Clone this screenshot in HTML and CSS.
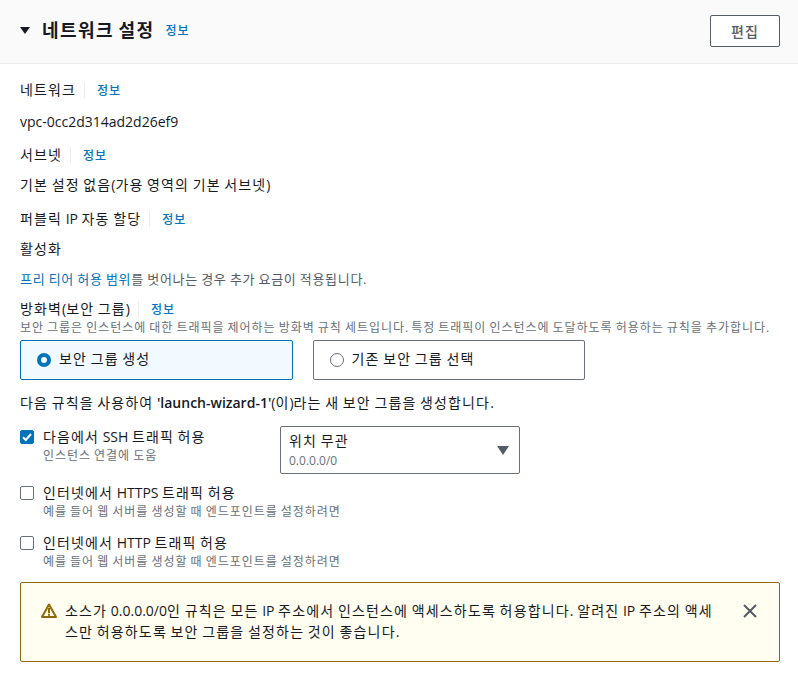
FILE: index.html
```html
<!DOCTYPE html>
<html lang="ko">
<head>
<meta charset="utf-8">
<title>네트워크 설정</title>
<link rel="stylesheet" href="styles.css">
</head>
<body>
<header class="head">
  <div class="head-left">
    <svg class="caret" width="10" height="7" viewBox="0 0 10 7"><path d="M0 0h10L5 7z" fill="#16191f"/></svg>
    <h2 class="title">네트워크 설정</h2>
    <a class="info">정보</a>
  </div>
  <button class="edit">편집</button>
</header>
<main class="body">
  <div class="label-row r1"><span class="label">네트워크</span><a class="info">정보</a></div>
  <div class="value v1 la">vpc-0cc2d314ad2d26ef9</div>
  <div class="label-row r2"><span class="label">서브넷</span><a class="info">정보</a></div>
  <div class="value v2">기본 설정 없음<span class="la">(</span>가용 영역의 기본 서브넷<span class="la">)</span></div>
  <div class="label-row r3"><span class="label">퍼블릭 <span class="la">IP</span> 자동 할당</span><a class="info">정보</a></div>
  <div class="value v3">활성화</div>
  <p class="note"><a class="link">프리 티어 허용 범위</a>를 벗어나는 경우 추가 요금이 적용됩니다<span class="la">.</span></p>
  <div class="label-row r4"><span class="label">방화벽<span class="la">(</span>보안 그룹<span class="la">)</span></span><a class="info">정보</a></div>
  <p class="desc">보안 그룹은 인스턴스에 대한 트래픽을 제어하는 방화벽 규칙 세트입니다<span class="la">.</span> 특정 트래픽이 인스턴스에 도달하도록 허용하는 규칙을 추가합니다<span class="la">.</span></p>
  <div class="tiles">
    <div class="tile on"><span class="radio on"></span><span class="tile-label">보안 그룹 생성</span></div>
    <div class="tile"><span class="radio"></span><span class="tile-label">기존 보안 그룹 선택</span></div>
  </div>
  <p class="rule">다음 규칙을 사용하여 <b class="la">'launch-wizard-1'</b><span class="la">(</span>이<span class="la">)</span>라는 새 보안 그룹을 생성합니다<span class="la">.</span></p>
  <div class="ssh">
    <div class="check-item">
      <span class="box on"><svg width="14" height="14" viewBox="0 0 14 14"><path d="M3 7.2l2.8 2.8L11 4" fill="none" stroke="#fff" stroke-width="2"/></svg></span>
      <div><div class="check-label">다음에서 <span class="la">SSH</span> 트래픽 허용</div><div class="check-sub">인스턴스 연결에 도움</div></div>
    </div>
    <div class="select">
      <div class="sel-text"><div class="sel-main">위치 무관</div><div class="sel-sub la">0.0.0.0/0</div></div>
      <svg width="12" height="9" viewBox="0 0 12 9"><path d="M0 0h12L6 9z" fill="#545b64"/></svg>
    </div>
  </div>
  <div class="check-item c2">
    <span class="box"></span>
    <div><div class="check-label">인터넷에서 <span class="la">HTTPS</span> 트래픽 허용</div><div class="check-sub">예를 들어 웹 서버를 생성할 때 엔드포인트를 설정하려면</div></div>
  </div>
  <div class="check-item c3">
    <span class="box"></span>
    <div><div class="check-label">인터넷에서 <span class="la">HTTP</span> 트래픽 허용</div><div class="check-sub">예를 들어 웹 서버를 생성할 때 엔드포인트를 설정하려면</div></div>
  </div>
  <div class="alert">
    <svg class="warn" width="16" height="15" viewBox="0 0 16 15"><path d="M8 1.5L1 14h14z" fill="none" stroke="#906806" stroke-width="2" stroke-linejoin="round"/><path d="M8 5v5M8 10.8v2" stroke="#906806" stroke-width="2"/></svg>
    <p class="alert-text">소스가 <span class="la">0.0.0.0/0</span>인 규칙은 모든 <span class="la">IP</span> 주소에서 인스턴스에 액세스하도록 허용합니다<span class="la">.</span> 알려진 <span class="la">IP</span> 주소의 액세<br>스만 허용하도록 보안 그룹을 설정하는 것이 좋습니다<span class="la">.</span></p>
    <svg class="close" width="14" height="14" viewBox="0 0 14 14"><path d="M1 1l12 12M13 1L1 13" fill="none" stroke="#545b64" stroke-width="2"/></svg>
  </div>
</main>
</body>
</html>
```
FILE: styles.css
```css
* { box-sizing: border-box; letter-spacing: .08em; word-spacing: -.08em; }
html, body { margin: 0; padding: 0; }
body {
  background: #fff;
  color: #16191f;
  font-family: "Open Sans", "Noto Sans CJK KR", sans-serif;
  font-size: 14px;
  line-height: 22px;
}
p { margin: 0; }
.la { letter-spacing: 0; word-spacing: 0; }
.head {
  height: 64px;
  background: #fafafa;
  border-bottom: 1px solid #eaeded;
  padding: 15px 18px 0 20px;
  display: flex;
  justify-content: space-between;
  align-items: flex-start;
}
.head-left { display: flex; align-items: center; height: 30px; }
.caret { margin-right: 12px; }
.title { margin: 0 11px 0 0; font-size: 18px; font-weight: 700; line-height: 26px; letter-spacing: 1.4px; word-spacing: -1.4px; }
.info { color: #0073bb; font-size: 12px; font-weight: 500; padding-top: 2px; }
.edit {
  width: 70px; height: 32px;
  border: 1px solid #545b64; border-radius: 2px;
  background: #fff; color: #545b64;
  font: 500 14px "Open Sans", "Noto Sans CJK KR", sans-serif;
  padding: 0;
}
.body { padding: 0 18px 0 20px; }
.label-row { display: flex; align-items: center; height: 22px; }
.label-row .label { padding-right: 8px; border-right: 1px solid #eaeded; height: 16px; line-height: 16px; margin-right: 12px; }
.r1 { margin-top: 15px; }
.v1 { margin-top: 10px; }
.r2 { margin-top: 11px; }
.v2 { margin-top: 8px; }
.r3 { margin-top: 12px; }
.v3 { margin-top: 8px; }
.note { margin-top: 8px; font-size: 13px; color: #545b64; letter-spacing: .68px; word-spacing: -.68px; }
.link { color: #0073bb; letter-spacing: .68px; word-spacing: -.68px; }
.r4 { margin-top: 8px; }
.desc { font-size: 12px; line-height: 16px; color: #687078; margin-top: 0; white-space: nowrap; }
.tiles { display: flex; gap: 20px; margin-top: 4px; }
.tile {
  width: 272.5px; height: 40px;
  border: 1px solid #687078; border-radius: 2px;
  display: flex; align-items: center;
  padding-left: 16px;
}
.tile.on { background: #f1faff; border-color: #0073bb; }
.tile-label { padding-bottom: 2px; }
.radio {
  width: 14px; height: 14px; border-radius: 50%;
  border: 1px solid #687078; background: #fff; margin-right: 8px; flex: none;
}
.radio.on { border: 4px solid #0073bb; }
.rule { margin-top: 12px; }
.rule b { font-weight: 600; }
.ssh { display: flex; margin-top: 12px; }
.check-item { display: flex; width: 260px; }
.box {
  width: 14px; height: 14px; border: 1px solid #687078; border-radius: 2px;
  margin: 4px 9px 0 0; flex: none; background: #fff; display: block;
}
.box.on { background: #0073bb; border-color: #0073bb; }
.box svg { display: block; margin: -1px; }
.check-item div { white-space: nowrap; }
.check-sub { font-size: 12px; line-height: 16px; color: #687078; }
.select {
  width: 240px; height: 48px;
  border: 1px solid #687078; border-radius: 2px;
  display: flex; justify-content: space-between; align-items: center;
  padding: 0 10px 0 8px;
}
.sel-main { line-height: 20px; margin-bottom: 2px; }
.sel-sub { font-size: 12px; line-height: 16px; color: #687078; }
.c2 { margin-top: 8px; }
.c3 { margin-top: 12px; }
.alert {
  margin-top: 12px;
  height: 80px;
  border: 1px solid #906806; border-radius: 2px;
  background: #fffef0;
  display: flex;
  padding: 17px 22px 0 20px;
  width: 760px;
}
.warn { margin: 3px 8px 0 0; flex: none; }
.alert-text { width: 660px; line-height: 21px; white-space: nowrap; letter-spacing: 1.16px; word-spacing: -1.16px; }
.close { margin: 4px 0 0 auto; flex: none; }
```
